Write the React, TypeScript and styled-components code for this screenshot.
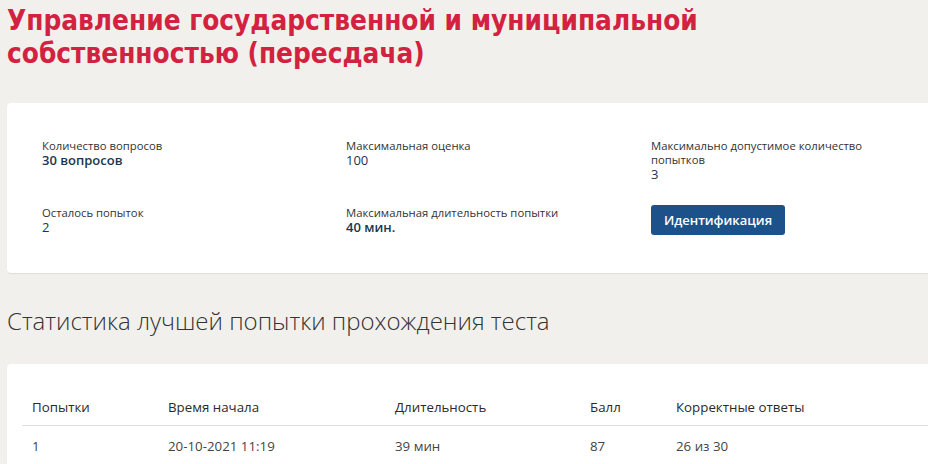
import React from "react";
import styled, { createGlobalStyle } from "styled-components";

const Global = createGlobalStyle`
  html, body { margin: 0; padding: 0; background: #f2f0ed; overflow: hidden; }
  body { font-family: "Open Sans", "Noto Sans", sans-serif; }
`;

const Page = styled.div`
  width: 928px;
  height: 464px;
  padding-left: 7px;
  box-sizing: border-box;
  overflow: hidden;
`;

const Title = styled.h1`
  margin: 0;
  padding-top: 4px;
  font-family: "DejaVu Sans Condensed", "Liberation Sans Narrow", sans-serif;
  font-weight: 700;
  font-size: 27.7px;
  line-height: 33px;
  color: #d3223f;
  width: 760px;
`;

const Card = styled.section<{ $top: number }>`
  margin-top: ${(p) => p.$top}px;
  background: #fff;
  border-radius: 4px 0 0 4px;
  box-shadow: 0 1px 1px rgba(0, 0, 0, 0.08);
`;

const InfoGrid = styled.div`
  display: grid;
  grid-template-columns: 304px 305px 240px;
  row-gap: 24px;
  padding: 36px 0 38px 35px;
`;

const Field = styled.div`
  display: flex;
  flex-direction: column;
  align-items: flex-start;
`;

const Label = styled.span`
  font-size: 11.3px;
  line-height: 14px;
  color: #333;
`;

const Value = styled.span<{ $bold?: boolean }>`
  font-size: 13px;
  line-height: 15px;
  font-weight: ${(p) => (p.$bold ? 600 : 400)};
  color: #1b3552;
`;

const Button = styled.button`
  margin-top: -1px;
  width: 134px;
  height: 30px;
  border: none;
  border-radius: 3px;
  background: #1c5189;
  color: #fff;
  font-family: inherit;
  font-size: 13px;
  font-weight: 600;
  cursor: pointer;
`;

const Heading = styled.h2`
  margin: 32px 0 0;
  font-family: "Open Sans", sans-serif;
  font-weight: 300;
  font-size: 24px;
  line-height: 32px;
  color: #333;
`;

const TableWrap = styled.div`
  padding: 26px 0 0 15px;
`;

const Table = styled.table`
  width: 100%;
  table-layout: fixed;
  border-collapse: collapse;
  font-size: 13.3px;
  color: #333;
`;

const Th = styled.th<{ $w?: number }>`
  box-sizing: border-box;
  text-align: left;
  font-weight: 400;
  padding: 8px 10px 9px;
  width: ${(p) => (p.$w ? `${p.$w}px` : "auto")};
  border-bottom: 1px solid #dedede;
  color: #2a2a2a;
`;

const Td = styled.td`
  padding: 11px 10px;
  color: #444;
`;

const info = [
  { label: "Количество вопросов", value: "30 вопросов", bold: true },
  { label: "Максимальная оценка", value: "100" },
  { label: "Максимально допустимое количество попытков", value: "3" },
  { label: "Осталось попыток", value: "2" },
  { label: "Максимальная длительность попытки", value: "40 мин.", bold: true },
];

export default function App() {
  return (
    <>
      <Global />
      <Page>
        <Title>Управление государственной и муниципальной собственностью (пересдача)</Title>
        <Card $top={33}>
          <InfoGrid>
            {info.map((f) => (
              <Field key={f.label}>
                <Label>{f.label}</Label>
                <Value $bold={f.bold}>{f.value}</Value>
              </Field>
            ))}
            <Field>
              <Button>Идентификация</Button>
            </Field>
          </InfoGrid>
        </Card>
        <Heading>Статистика лучшей попытки прохождения теста</Heading>
        <Card $top={27}>
          <TableWrap>
            <Table>
              <thead>
                <tr>
                  <Th $w={136}>Попытки</Th>
                  <Th $w={227}>Время начала</Th>
                  <Th $w={195}>Длительность</Th>
                  <Th $w={86}>Балл</Th>
                  <Th>Корректные ответы</Th>
                </tr>
              </thead>
              <tbody>
                <tr>
                  <Td>1</Td>
                  <Td>20-10-2021 11:19</Td>
                  <Td>39 мин</Td>
                  <Td>87</Td>
                  <Td>26 из 30</Td>
                </tr>
              </tbody>
            </Table>
          </TableWrap>
        </Card>
      </Page>
    </>
  );
}
